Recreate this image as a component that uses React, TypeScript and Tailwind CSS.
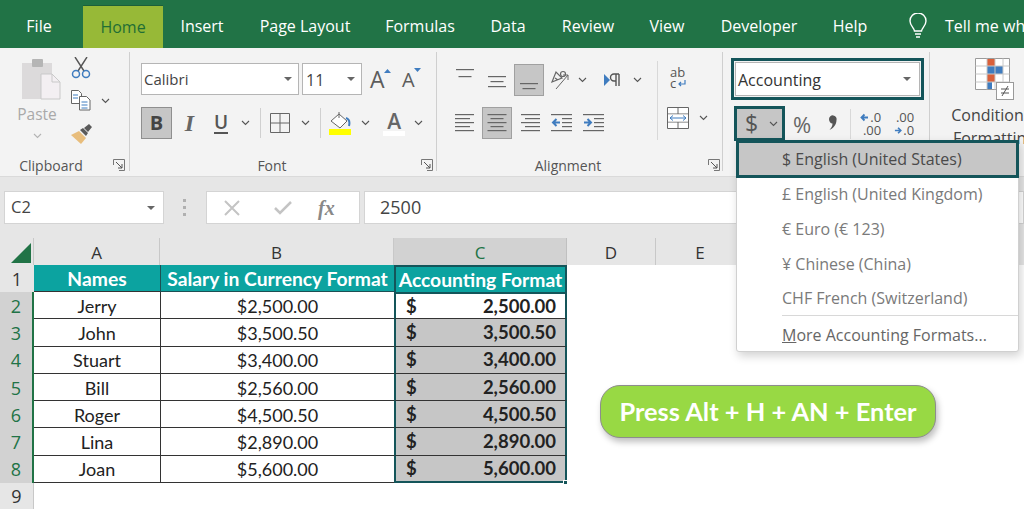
/**
 * Excel ribbon + sheet, Accounting number format dropdown open
 */
const DARK = 'border-[#14555a]';

const tabs = [
  { name: 'Insert', w: 'w-[78px]' },
  { name: 'Page Layout', w: 'w-[128px]' },
  { name: 'Formulas', w: 'w-[102px]' },
  { name: 'Data', w: 'w-[74px]' },
  { name: 'Review', w: 'w-[86px]' },
  { name: 'View', w: 'w-[72px]' },
  { name: 'Developer', w: 'w-[112px]' },
  { name: 'Help', w: 'w-[70px]' },
];

const rows = [
  { n: 2, name: 'Jerry', salary: '$2,500.00', acc: '2,500.00' },
  { n: 3, name: 'John', salary: '$3,500.50', acc: '3,500.50' },
  { n: 4, name: 'Stuart', salary: '$3,400.00', acc: '3,400.00' },
  { n: 5, name: 'Bill', salary: '$2,560.00', acc: '2,560.00' },
  { n: 6, name: 'Roger', salary: '$4,500.50', acc: '4,500.50' },
  { n: 7, name: 'Lina', salary: '$2,890.00', acc: '2,890.00' },
  { n: 8, name: 'Joan', salary: '$5,600.00', acc: '5,600.00' },
];

const Chevron = ({ className = '' }: { className?: string }) => (
  <svg width="9" height="6" viewBox="0 0 9 6" className={className}>
    <path d="M1 1l3.5 3.5L8 1" fill="none" stroke="#555" strokeWidth="1.1" />
  </svg>
);

const Caret = ({ className = '' }: { className?: string }) => (
  <svg width="8" height="4" viewBox="0 0 8 4" className={className}>
    <path d="M0 0h8L4 4z" fill="#666" />
  </svg>
);

const Launcher = ({ className = '' }: { className?: string }) => (
  <svg width="12" height="12" viewBox="0 0 12 12" className={className}>
    <path d="M.5 6V.5H11.5V11.5H6" fill="none" stroke="#777" />
    <path d="M3 3l6 6M9 5v4H5" fill="none" stroke="#555" />
  </svg>
);

// stack of horizontal text-alignment lines
const Lines = ({ widths, align = 'l', gap = 4 }: { widths: number[]; align?: 'l' | 'c' | 'r'; gap?: number }) => (
  <svg width="20" height={(widths.length - 1) * gap + 2} viewBox={`0 0 20 ${(widths.length - 1) * gap + 2}`}>
    {widths.map((w, i) => {
      const x = align === 'l' ? 0 : align === 'c' ? (20 - w) / 2 : 20 - w;
      return <rect key={i} x={x} y={i * gap} width={w} height="1.2" fill="#666" />;
    })}
  </svg>
);

const Indent = ({ flip }: { flip?: boolean }) => (
  <svg width="21" height="18" viewBox="0 0 21 18">
    {[0, 4, 8, 12, 16].map(y => (
      <rect key={y} x={y === 0 || y === 16 ? 0 : 11} y={y} width={y === 0 || y === 16 ? 21 : 10} height="1.2" fill="#666" />
    ))}
    <path d={flip ? 'M1 8.5h6M4.5 5l3.5 3.5L4.5 12' : 'M9 8.5H3M5.5 5L2 8.5 5.5 12'} fill="none" stroke="#3f7cbf" strokeWidth="2" />
  </svg>
);

const Group = ({ width, labelW, gap, label, children }: { width: string; labelW: string; gap: string; label: string; children: React.ReactNode }) => (
  <div className={`${width} h-[119px] mt-[4px] shrink-0 border-r border-[#cfcfcf] flex flex-col`}>
    <div className="h-[105px]">{children}</div>
    <div className="flex items-center h-[16px] mt-[-1px]">
      <span className={`${labelW} text-center text-[14px] leading-[16px] text-[#555] mt-[5px]`}>{label}</span>
      <Launcher className={`${gap} mt-[4px]`} />
    </div>
  </div>
);

const Ribbon = () => (
  <div className="h-[129px] bg-[#f3f3f3] border-b border-[#dadada] flex">
    {/* Clipboard */}
    <Group width="w-[130px]" labelW="w-[102px]" gap="ml-[11px]" label="Clipboard">
      <div className="flex">
        <div className="ml-[18px] mt-[6px] w-[38px] flex flex-col items-center">
          <svg width="39" height="42" viewBox="0 0 39 42" className="ml-[8px] shrink-0">
            <rect x="0" y="5" width="30" height="36" fill="#dcdadb" />
            <rect x="10" y="1" width="11" height="8" rx="1" fill="#b5b5b5" />
            <path d="M19 16h11l8 8v17H19z" fill="#f3eff2" stroke="#c9c9c9" />
            <path d="M30 16v8h8" fill="none" stroke="#c9c9c9" />
          </svg>
          <span className="mt-[4px] text-[15.5px] leading-[20px] text-[#a9a9a9]">Paste</span>
          <Chevron className="mt-[9px] opacity-40" />
        </div>
        <div className="ml-[15px] mt-[5px] flex flex-col">
          <svg width="20" height="22" viewBox="0 0 20 22">
            <path d="M4 0l9 14M16 0L7 14" stroke="#555" strokeWidth="1.4" fill="none" />
            <circle cx="5" cy="17" r="3.5" fill="none" stroke="#3f7cbf" strokeWidth="1.5" />
            <circle cx="15" cy="17" r="3.5" fill="none" stroke="#3f7cbf" strokeWidth="1.5" />
          </svg>
          <div className="mt-[11px] flex items-center">
            <svg width="20" height="21" viewBox="0 0 20 21">
              <path d="M.5.5h7l3 3v10H.5z" fill="#fff" stroke="#666" />
              <path d="M8.5 6.5h7l3.500 3.500v10H8.500z" fill="#fff" stroke="#666" />
              <path d="M2 5h5M2 8h5M10.500 12h6M10.500 15h6M10.500 18h6" stroke="#3f7cbf" />
            </svg>
            <Chevron className="ml-[10px]" />
          </div>
          <svg width="22" height="20" viewBox="0 0 22 20" className="mt-[13px]">
            <path d="M0 11l8-4 7 7-5 6z" fill="#e8bd7c" />
            <path d="M9 6l3-2 5 5-2 3zM13 4l5-4 3 3-4 5z" fill="#5a5a5a" />
          </svg>
        </div>
      </div>
    </Group>

    {/* Font */}
    <Group width="w-[307px]" labelW="w-[284px]" gap="ml-[7px]" label="Font">
      <div className="ml-[11px] pt-[11px]">
        <div className="flex items-center h-[32px]">
          <div className="w-[158px] h-[32px] bg-white border border-[#b5b5b5] flex items-center pl-[2px] pr-[6px]">
            <span className="text-[15px] text-[#444] pt-[1px]">Calibri</span>
            <Caret className="ml-auto" />
          </div>
          <div className="w-[60px] h-[32px] ml-[3px] bg-white border border-[#b5b5b5] flex items-center pl-[3px] pr-[6px]">
            <span className="text-[16px] text-[#444] pt-[1px]">11</span>
            <Caret className="ml-auto" />
          </div>
          <div className="relative ml-[8px] w-[20px]">
            <span className="block text-[23px] leading-[26px] font-medium text-[#5c5c5c]">A</span>
            <svg width="7" height="4" viewBox="0 0 7 4" className="absolute left-[14px] top-[3px]"><path d="M0 4l3.500-4L7 4z" fill="#3f7cbf" /></svg>
          </div>
          <div className="relative ml-[12px] w-[20px]">
            <span className="block text-[20px] leading-[26px] font-medium text-[#5c5c5c] pt-[2px]">A</span>
            <svg width="7" height="4" viewBox="0 0 7 4" className="absolute left-[12px] top-[3px]"><path d="M0 0h7L3.500 4z" fill="#3f7cbf" /></svg>
          </div>
        </div>
        <div className="flex items-center h-[32px] mt-[12px]">
          <div className="w-[31px] h-[32px] bg-[#c6c6c6] border border-[#8f8f8f] flex items-center justify-center text-[20px] font-bold text-[#444]">B</div>
          <span className="ml-[10px] w-[15px] text-[24px] leading-[30px] font-bold italic font-['Liberation_Serif',serif] text-[#666] text-center">I</span>
          <div className="ml-[17px] flex flex-col items-center">
            <span className="text-[19px] leading-[19px] font-semibold text-[#555]">U</span>
            <span className="w-[14px] h-[2px] bg-[#555]" />
          </div>
          <Chevron className="ml-[13px]" />
          <span className="ml-[10px] w-px h-[30px] bg-[#d0d0d0]" />
          <svg width="20" height="20" viewBox="0 0 20 20" className="ml-[9px]">
            <path d="M.5.5h19v19H.5zM10 .5v19M.5 10h19" fill="none" stroke="#666" />
          </svg>
          <Chevron className="ml-[11px]" />
          <span className="ml-[10px] w-px h-[30px] bg-[#d0d0d0]" />
          <div className="ml-[8px] flex flex-col">
            <svg width="22" height="17" viewBox="0 0 22 17">
              <path d="M2 9l8-7 8 7-7 7z" fill="#fff" stroke="#666" />
              <path d="M10 0v6" stroke="#666" />
              <path d="M17 6c3 1 4 4 3 8" fill="none" stroke="#3f7cbf" strokeWidth="2" />
            </svg>
            <span className="w-[22px] h-[6px] bg-[#ffff00]" />
          </div>
          <Chevron className="ml-[10px]" />
          <div className="ml-[13px] flex flex-col items-center">
            <span className="text-[21px] leading-[20px] font-semibold text-[#666]">A</span>
            <span className="w-[22px] h-[5px] bg-white" />
          </div>
          <Chevron className="ml-[9px]" />
        </div>
      </div>
    </Group>

    {/* Alignment */}
    <Group width="w-[286px]" labelW="w-[262px]" gap="ml-[9px]" label="Alignment">
      <div className="flex">
        <div className="ml-[18px] pt-[12px]">
          <div className="flex items-center h-[32px]">
            <div className="self-start mt-[5px]"><Lines widths={[18, 13]} align="c" gap={7} /></div>
            <div className="ml-[12px] mt-[4px]"><Lines widths={[18, 13, 18]} align="c" gap={5} /></div>
            <div className="ml-[7px] w-[30px] h-[32px] bg-[#c6c6c6] border border-[#a0a0a0] flex items-end justify-center pb-[5px]">
              <Lines widths={[18, 13]} align="c" gap={5} />
            </div>
            <svg width="20" height="22" viewBox="0 0 20 22" className="ml-[6px] overflow-visible">
              <path d="M2 13l4-10 6 6zM5 9l3 2" fill="none" stroke="#666" strokeWidth="1.200" />
              <circle cx="13" cy="5" r="2.500" fill="none" stroke="#666" strokeWidth="1.200" />
              <path d="M6 20L18 6M13 6h5v5" fill="none" stroke="#666" />
            </svg>
            <Chevron className="ml-[8px]" />
            <svg width="17" height="14" viewBox="0 0 17 14" className="ml-[17px]">
              <path d="M0 1l6 6-6 6z" fill="#3f7cbf" />
              <path d="M12 1v12M15 1v12M15 1h-5a3 3 0 0 0 0 7h2" fill="none" stroke="#555" strokeWidth="1.4" />
            </svg>
            <Chevron className="ml-[12px]" />
          </div>
          <div className="flex items-center h-[32px] mt-[11px]">
            <Lines widths={[19, 15, 19, 15, 19]} />
            <div className="ml-[7px] w-[30px] h-[32px] bg-[#c6c6c6] border border-[#a0a0a0] flex items-center justify-center">
              <Lines widths={[19, 13, 19, 13, 19]} align="c" />
            </div>
            <div className="ml-[8px]"><Lines widths={[19, 15, 19, 15, 19]} align="r" /></div>
            <div className="ml-[11px]"><Indent /></div>
            <div className="ml-[11px]"><Indent flip /></div>
          </div>
        </div>
        <span className="ml-[15px] mt-[9px] w-px h-[79px] bg-[#d8d8d8]" />
        <div className="ml-[9px] pt-[15px] flex flex-col">
          <div className="ml-[3px] flex flex-col font-medium text-[#555] text-[13px] leading-[11px]">
            <span>ab</span>
            <div className="flex items-center">
              <span>c</span>
              <svg width="8" height="8" viewBox="0 0 8 8" className="ml-[2px]"><path d="M7 0v4H1M3 2L1 4l2 2" fill="none" stroke="#3f7cbf" strokeWidth="1.200" /></svg>
            </div>
          </div>
          <div className="flex items-center mt-[18px]">
            <svg width="22" height="22" viewBox="0 0 22 22">
              <path d="M.5.5h21v21H.5zM.5 7h21M.5 15h21M11 .5V7M11 15v6.500" fill="#fff" stroke="#666" />
              <rect x="1" y="7.500" width="20" height="7" fill="#fff" />
              <path d="M3 11h16M6 8.500L3 11l3 2.500M16 8.500l3 2.500-3 2.500" fill="none" stroke="#3f7cbf" />
            </svg>
            <Chevron className="ml-[10px]" />
          </div>
        </div>
      </div>
    </Group>

    {/* Number */}
    <div className="w-[207px] h-[119px] mt-[4px] shrink-0 border-r border-[#cfcfcf]">
      <div className={`ml-[8px] mt-[6px] w-[193px] h-[42px] border-[3px] ${DARK} p-[1px]`}>
        <div className="h-full bg-white border border-[#b5b5b5] flex items-center pl-[2px] pr-[8px]">
          <span className="text-[16px] text-[#333] pt-[1px]">Accounting</span>
          <Caret className="ml-auto" />
        </div>
      </div>
      <div className="flex items-center mt-[6px] ml-[11px]">
        <div className={`w-[51px] h-[35px] border-[3px] ${DARK} bg-[#c6c6c6] flex items-center`}>
          <span className="ml-[8px] text-[23px] leading-none text-[#555]">$</span>
          <Chevron className="ml-[11px]" />
        </div>
        <span className="ml-[8px] text-[22px] leading-none text-[#666]">%</span>
        <svg width="9" height="15" viewBox="0 0 9 15" className="ml-[17px] mb-[3px]">
          <path d="M1 4a3.800 3.800 0 1 1 7.500 1C8.500 10 5 13.500 1.500 15c2-2.500 3-4 3-6.500C2.500 8.500 1 6.500 1 4z" fill="#555" />
        </svg>
        <span className="ml-[13px] w-px h-[30px] bg-[#d8d8d8]" />
        <div className="ml-[8px] w-[22px] text-[13px] leading-[13px] text-[#555]">
          <div className="flex items-center justify-end"><svg width="9" height="9" viewBox="0 0 9 9" className="mr-[1px]"><path d="M8 4.500H2M4.500 1.500l-3 3 3 3" fill="none" stroke="#3f7cbf" strokeWidth="1.800" /></svg>.0</div>
          <div className="text-right">.00</div>
        </div>
        <div className="ml-[13px] w-[20px] text-[13px] leading-[13px] text-[#555]">
          <div className="text-right">.00</div>
          <div className="flex items-center justify-end"><svg width="9" height="9" viewBox="0 0 9 9" className="mr-[1px]"><path d="M1 4.500h6M4.500 1.500l3 3-3 3" fill="none" stroke="#3f7cbf" strokeWidth="1.800" /></svg>.0</div>
        </div>
      </div>
    </div>

    {/* Conditional Formatting, runs off the window */}
    <div className="w-[128px] shrink-0 flex flex-col items-center pt-[10px]">
      <svg width="39" height="42" viewBox="0 0 39 42">
        <path d="M.5.500h34v31H.5z" fill="#fff" stroke="#9a9a9a" />
        <rect x="12" y="1" width="8" height="7" fill="#d9603b" />
        <rect x="12" y="8" width="16" height="8" fill="#3f7cbf" />
        <rect x="12" y="16" width="8" height="8" fill="#d9603b" />
        <rect x="12" y="24" width="5" height="7" fill="#3f7cbf" />
        <path d="M12 .5v31M20 .5v31M28 .5v24M.5 8h34M.5 16h34M.5 24h34" fill="none" stroke="#c8c8c8" />
        <rect x="21.500" y="24.500" width="17" height="17" fill="#fff" stroke="#9a9a9a" />
        <path d="M26 31h8M26 35h8M33 28l-6 10" fill="none" stroke="#555" />
      </svg>
      <span className="mt-[4px] text-[16px] leading-[23px] text-[#444] whitespace-nowrap">Conditional</span>
      <span className="text-[16px] leading-[23px] text-[#444] whitespace-nowrap">Formatting</span>
    </div>
  </div>
);

const FormulaBar = () => (
  <div className="h-[61px] bg-[#e6e6e6] flex items-start pt-[14px] pl-[4px]">
    <div className="w-[160px] h-[33px] bg-white border border-[#d4d4d4] flex items-center pl-[6px] pr-[8px]">
      <span className="text-[16.5px] text-[#444]">C2</span>
      <Caret className="ml-auto" />
    </div>
    <div className="ml-[19px] mt-[8px] flex flex-col gap-[4px]">
      <span className="w-[3px] h-[3px] bg-[#b0b0b0]" />
      <span className="w-[3px] h-[3px] bg-[#b0b0b0]" />
      <span className="w-[3px] h-[3px] bg-[#b0b0b0]" />
    </div>
    <div className="ml-[20px] w-[154px] h-[33px] bg-white border border-[#d4d4d4] flex items-center">
      <svg width="16" height="16" viewBox="0 0 16 16" className="ml-[17px]">
        <path d="M1 1l14 14M15 1L1 15" stroke="#c4c4c4" strokeWidth="2" />
      </svg>
      <svg width="18" height="14" viewBox="0 0 18 14" className="ml-[34px]">
        <path d="M1 7l5 5L17 1" fill="none" stroke="#c4c4c4" strokeWidth="2.500" />
      </svg>
      <span className="ml-[26px] text-[20px] italic font-bold font-['Liberation_Serif',serif] text-[#888]">fx</span>
    </div>
    <div className="ml-[4px] flex-1 h-[33px] bg-white border border-[#d4d4d4] flex items-center pl-[15px]">
      <span className="text-[18px] text-[#444]">2500</span>
    </div>
  </div>
);

const Sheet = () => (
  <div className="font-['Lato','Liberation_Sans',sans-serif] text-[#222] text-[18px] relative">
    {/* column headers */}
    <div className="flex h-[27px] bg-[#e6e6e6] text-[17px] text-[#333] font-['Open_Sans',sans-serif]">
      <div className="w-[34px] border-r border-[#c8c8c8] flex items-end justify-end pr-[2px] pb-[2px]">
        <svg width="20" height="20" viewBox="0 0 20 20"><path d="M20 0v20H0z" fill="#217346" /></svg>
      </div>
      <div className="w-[126px] border-r border-[#c8c8c8] flex items-center justify-center pt-[3px]">A</div>
      <div className="w-[234px] border-r border-[#c8c8c8] flex items-center justify-center pt-[3px]">B</div>
      <div className="w-[173px] bg-[#d2d2d2] border-r border-[#c0c0c0] flex items-center justify-center text-[#217346] pt-[3px]">C</div>
      <div className="w-[89px] border-r border-[#c8c8c8] flex items-center justify-center pt-[3px]">D</div>
      <div className="w-[88px] flex items-center justify-center pt-[3px]">E</div>
    </div>

    {/* header row */}
    <div className="flex h-[27px] text-[19.3px]">
      <div className="w-[34px] bg-[#e6e6e6] flex items-center justify-center text-[18px] font-['Open_Sans',sans-serif] text-[#333] pt-[1px]">1</div>
      <div className="w-[126px] bg-[#0ca3a0] text-white font-bold flex items-center justify-center pt-[2px] border-b border-[#333]">Names</div>
      <div className="w-[234px] bg-[#0ca3a0] text-white font-bold flex items-center justify-center pt-[2px] border-l border-b border-[#1d5054] whitespace-nowrap">Salary in Currency Format</div>
      <div className="w-[173px] bg-[#0ca3a0] text-white font-bold flex items-center justify-center pt-[1px] border-x-2 border-t-2 border-[#14555a] whitespace-nowrap">Accounting Format</div>
    </div>

    {/* data rows */}
    {rows.map((r, i) => {
      const last = i === rows.length - 1;
      return (
        <div key={r.n} className="flex h-[27.3px]">
          <div className="w-[34px] bg-[#d2d2d2] border-r-2 border-[#217346] flex items-center justify-center text-[18px] font-['Open_Sans',sans-serif] text-[#217346] pt-[1px]">{r.n}</div>
          <div className="w-[126px] border-b border-[#333] flex items-center justify-center pt-[2px]">{r.name}</div>
          <div className="w-[234px] border-b border-l border-[#333] flex items-center justify-center pt-[2px]">{r.salary}</div>
          <div className={`w-[173px] border-x-2 ${DARK} ${i === 0 ? 'border-t-2 bg-white' : 'bg-[#c6c6c6]'} ${last ? 'border-b-2' : 'border-b border-b-[#333]'} flex items-center justify-between pl-[10px] pr-[9px] pt-[1px] font-bold text-[18.5px]`}>
            <span>$</span>
            <span>{r.acc}</span>
          </div>
        </div>
      );
    })}

    {/* row 9 */}
    <div className="flex h-[26px]">
      <div className="w-[34px] bg-[#e6e6e6] border-r border-[#c8c8c8] flex items-center justify-center text-[18px] font-['Open_Sans',sans-serif] text-[#333]">9</div>
    </div>

    {/* fill handle */}
    <span className="absolute left-[563px] top-[242px] w-[5px] h-[5px] bg-[#14555a] border border-white" />
  </div>
);

const AccountingMenu = () => (
  <div className="absolute left-[736px] top-[140px] w-[283px] h-[212px] bg-white rounded-b-[3px] border border-[#d0d0d0] shadow-[2px_4px_10px_rgba(0,0,0,0.18)] text-[16px] text-[#7a7a7a] whitespace-nowrap">
    <div className={`-m-px h-[38px] bg-[#c6c6c6] border-[3px] ${DARK} flex items-center pl-[43px] text-[#4a4a4a]`}>$ English (United States)</div>
    <div className="h-[35px] mt-[-2px] flex items-center pl-[45px]">£ English (United Kingdom)</div>
    <div className="h-[35px] flex items-center pl-[45px]">€ Euro (€ 123)</div>
    <div className="h-[35px] flex items-center pl-[45px]">¥ Chinese (China)</div>
    <div className="h-[34px] flex items-center pl-[45px]">CHF French (Switzerland)</div>
    <div className="ml-[45px] h-px bg-[#d8d8d8]" />
    <div className="h-[38px] flex items-center pl-[45px] text-[#666]"><span className="underline">M</span>ore Accounting Formats...</div>
  </div>
);

export default function App() {
  return (
    <div className="relative w-[1024px] h-[509px] overflow-hidden bg-white font-['Open_Sans',sans-serif]">
      {/* Tab strip */}
      <div className="h-[48px] bg-[#217346] flex items-end text-white text-[16px]">
        <div className="w-[78px] shrink-0 h-[48px] pt-[4px] flex items-center justify-center">File</div>
        <div className="w-[5px] shrink-0" />
        <div className="w-[80px] shrink-0 h-[43px] pb-[1px] bg-[#97b937] border-t border-[#1c5f3a] flex items-center justify-center text-[#1f6e35]">Home</div>
        {tabs.map(t => (
          <div key={t.name} className={`${t.w} shrink-0 h-[48px] pt-[4px] flex items-center justify-center whitespace-nowrap`}>{t.name}</div>
        ))}
        <div className="h-[48px] shrink-0 flex items-center whitespace-nowrap ml-[24px]">
          <svg width="18" height="26" viewBox="0 0 18 26" className="mt-[4px]">
            <path d="M5.500 18c0-3-4.500-5-4.500-10a8 8 0 0 1 16 0c0 5-4.500 7-4.500 10zM6 21h6M7 24h4" fill="none" stroke="#fff" strokeWidth="1.400" />
          </svg>
          <span className="ml-[18px] pt-[4px]">Tell me what you want to do</span>
        </div>
      </div>

      <Ribbon />
      <FormulaBar />
      <Sheet />
      <AccountingMenu />

      {/* Shortcut callout */}
      <div className="absolute left-[600px] top-[385px] w-[336px] h-[53px] rounded-[20px] bg-[#98d944] border border-[#8d8d8d] shadow-[2px_4px_6px_rgba(0,0,0,0.25)] flex items-center justify-center pb-[1px] font-['Lato',sans-serif] font-bold text-[25.4px] text-white whitespace-nowrap">
        Press Alt + H + AN + Enter
      </div>
    </div>
  );
}
